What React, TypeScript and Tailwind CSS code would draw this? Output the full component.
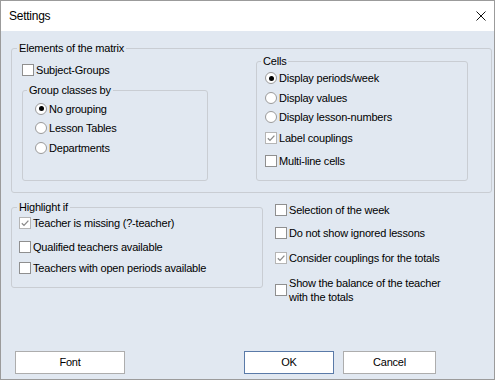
import React from 'react';

function Check({ checked }: { checked?: boolean }) {
  return (
    <span
      className={
        checked
          ? 'flex h-[12px] w-[12px] shrink-0 items-center justify-center border border-[#b5b5b5] bg-white'
          : 'flex h-[12px] w-[12px] shrink-0 items-center justify-center border border-[#8f8f8f] bg-white'
      }
    >
      {checked && (
        <svg viewBox="0 0 10 10" className="h-[10px] w-[10px]">
          <path d="M1.8 5.2 L4 7.4 L8.4 2.6" fill="none" stroke="#8a8a8a" strokeWidth={1.3} />
        </svg>
      )}
    </span>
  );
}

function Radio({ checked }: { checked?: boolean }) {
  return (
    <span className="flex h-[12px] w-[12px] shrink-0 items-center justify-center rounded-full border border-[#9a9a9a] bg-white">
      {checked && <span className="h-[5px] w-[5px] rounded-full bg-black" />}
    </span>
  );
}

function Row({ children, label, className }: { children: React.ReactNode; label: React.ReactNode; className?: string }) {
  return (
    <div className={`flex h-[16px] items-center gap-[2px] ${className ?? ''}`}>
      {children}
      <span className="leading-[14px]">{label}</span>
    </div>
  );
}

export default function App() {
  return (
    <div className="font-['Liberation_Sans',Arial,sans-serif] text-[11px] tracking-[-0.2px] text-black">
      <div className="flex h-[380px] w-[495px] flex-col border border-[#9b9b9b] bg-[#e1e8f1]">
        {/* title bar */}
        <div className="flex h-[30px] items-center justify-between bg-white px-[8px]">
          <span className="text-[12px] tracking-[-0.25px]">Settings</span>
          <svg viewBox="0 0 10 10" className="h-[10px] w-[10px]">
            <path d="M0.5 0.5 L9.5 9.5 M9.5 0.5 L0.5 9.5" stroke="#111" strokeWidth={1} />
          </svg>
        </div>

        <div className="flex flex-1 flex-col px-[10px]">
          {/* Elements of the matrix */}
          <fieldset className="mt-[10px] h-[152px] w-[481px] rounded-[3px] border border-[#c9cdd3]">
            <legend className="ml-[5px] px-[2px] leading-[14px]">Elements of the matrix</legend>
            <div className="flex items-start">
              <div className="ml-[10px] w-[186px]">
                <Row label="Subject-Groups" className="mt-[7px]">
                  <Check />
                </Row>
                <fieldset className="mt-[5px] h-[98px] w-[186px] rounded-[3px] border border-[#c9cdd3]">
                  <legend className="ml-[4px] px-[2px] leading-[14px]">Group classes by</legend>
                  <div className="mt-[2px] pl-[12px]">
                    <div className="flex h-[19.5px] items-center gap-[2px]">
                      <Radio checked />
                      <span>No grouping</span>
                    </div>
                    <div className="flex h-[19.5px] items-center gap-[2px]">
                      <Radio />
                      <span>Lesson Tables</span>
                    </div>
                    <div className="flex h-[19.5px] items-center gap-[2px]">
                      <Radio />
                      <span>Departments</span>
                    </div>
                  </div>
                </fieldset>
              </div>

              <fieldset className="ml-[48px] mt-[-1px] h-[127px] w-[212px] rounded-[3px] border border-[#c9cdd3]">
                <legend className="ml-[4px] px-[2px] leading-[14px]">Cells</legend>
                <div className="pl-[8px]">
                  <Row label="Display periods/week" className="mt-[2px]">
                    <Radio checked />
                  </Row>
                  <Row label="Display values" className="mt-[4px]">
                    <Radio />
                  </Row>
                  <Row label="Display lesson-numbers" className="mt-[3px]">
                    <Radio />
                  </Row>
                  <Row label="Label couplings" className="mt-[5px]">
                    <Check checked />
                  </Row>
                  <Row label="Multi-line cells" className="mt-[7px]">
                    <Check />
                  </Row>
                </div>
              </fieldset>
            </div>
          </fieldset>

          {/* Highlight + options */}
          <div className="mt-[7px] flex items-start">
            <fieldset className="h-[88px] w-[252px] rounded-[3px] border border-[#c9cdd3]">
              <legend className="ml-[5px] px-[2px] leading-[14px]">Highlight if</legend>
              <div className="pl-[7px]">
                <Row label="Teacher is missing (?-teacher)" className="mt-[1px]">
                  <Check checked />
                </Row>
                <Row label="Qualified teachers available" className="mt-[8px]">
                  <Check />
                </Row>
                <Row label="Teachers with open periods available" className="mt-[5px]">
                  <Check />
                </Row>
              </div>
            </fieldset>

            <div className="ml-[12px] pt-[2px]">
              <Row label="Selection of the week">
                <Check />
              </Row>
              <Row label="Do not show ignored lessons" className="mt-[7px]">
                <Check />
              </Row>
              <Row label="Consider couplings for the totals" className="mt-[9px]">
                <Check checked />
              </Row>
              <div className="mt-[10px] flex items-center gap-[2px]">
                <Check />
                <span className="leading-[14px]">
                  Show the balance of the teacher
                  <br />
                  with the totals
                </span>
              </div>
            </div>
          </div>

          {/* buttons */}
          <div className="mt-auto mb-[5px] flex">
            <button className="ml-[4px] h-[23px] w-[110px] border border-[#adadad] bg-white">Font</button>
            <button className="ml-[119px] h-[23px] w-[90px] border border-[#5a7aa8] bg-white">OK</button>
            <button className="ml-[9px] h-[23px] w-[93px] border border-[#adadad] bg-white">Cancel</button>
          </div>
        </div>
      </div>
    </div>
  );
}
